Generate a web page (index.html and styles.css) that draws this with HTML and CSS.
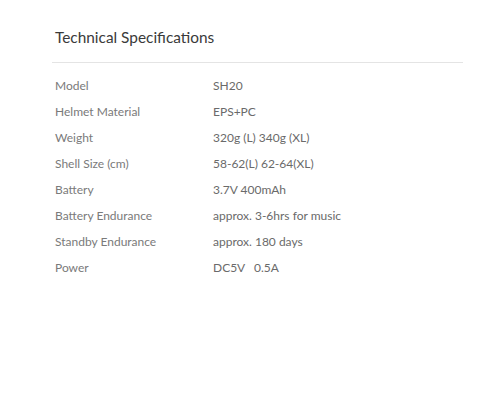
FILE: index.html
```html
<!DOCTYPE html>
<html>
<head>
<meta charset="utf-8">
<link rel="stylesheet" href="styles.css">
</head>
<body>
<div class="specs">
  <h2 class="title">Technical Specifications</h2>
  <div class="rule"></div>
  <div class="table">
    <div class="row"><span class="label">Model</span><span class="value">SH20</span></div>
    <div class="row"><span class="label">Helmet Material</span><span class="value">EPS+PC</span></div>
    <div class="row"><span class="label">Weight</span><span class="value">320g (L) 340g (XL)</span></div>
    <div class="row"><span class="label">Shell Size (cm)</span><span class="value">58-62(L) 62-64(XL)</span></div>
    <div class="row"><span class="label">Battery</span><span class="value">3.7V 400mAh</span></div>
    <div class="row"><span class="label">Battery Endurance</span><span class="value">approx. 3-6hrs for music</span></div>
    <div class="row"><span class="label">Standby Endurance</span><span class="value">approx. 180 days</span></div>
    <div class="row"><span class="label">Power</span><span class="value">DC5V&nbsp;&nbsp; 0.5A</span></div>
  </div>
</div>
</body>
</html>
```
FILE: styles.css
```css
html, body {
  margin: 0;
  padding: 0;
  background: #fff;
}
body {
  font-family: Lato, "Noto Sans", sans-serif;
}
.specs {
  width: 411px;
  margin-left: 52px;
  padding-top: 26px;
}
.title {
  margin: 0;
  padding-left: 3px;
  font-size: 15.4px;
  font-weight: 400;
  color: #3a3a3a;
  line-height: 22px;
}
.rule {
  margin-top: 14px;
  height: 1px;
  background: #e4e4e4;
}
.table {
  padding-top: 14px;
  padding-left: 3px;
}
.row {
  display: flex;
  height: 26px;
  line-height: 18px;
  font-size: 12px;
  color: #7a7a7a;
}
.label {
  width: 158px;
}
.value {
  color: #6a6a6a;
}
```
